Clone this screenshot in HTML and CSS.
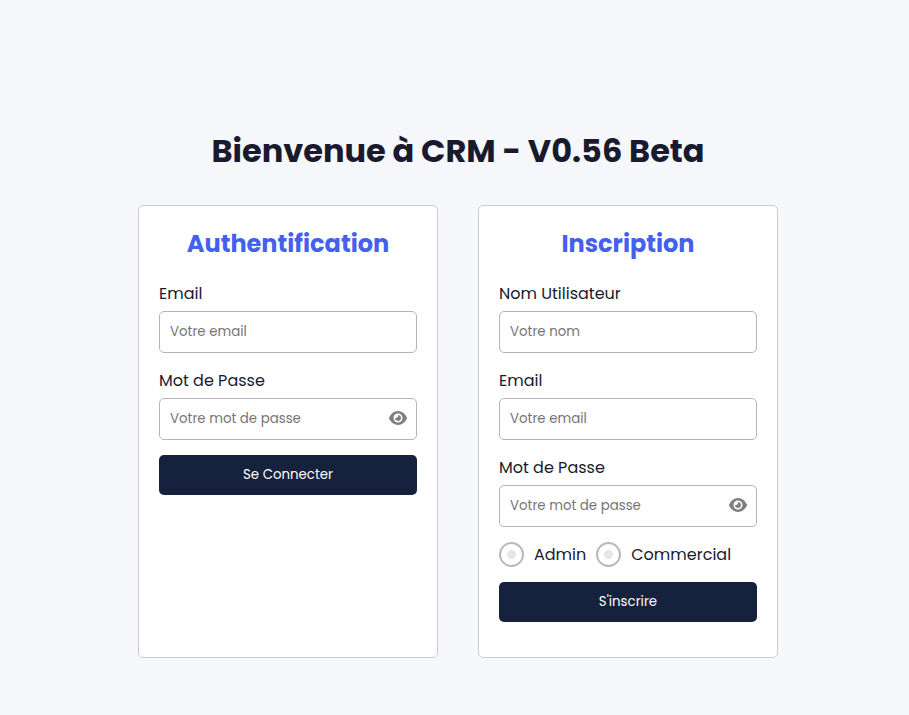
FILE: index.html
```html
<!DOCTYPE html>
<html lang="fr">
<head>
<meta charset="utf-8">
<title>CRM</title>
<link rel="stylesheet" href="styles.css">
</head>
<body>
<svg class="sprite" aria-hidden="true"><symbol id="eye" viewBox="0 0 576 512"><path d="M288 32c-80.8 0-145.5 36.8-192.6 80.6C48.6 156 17.3 208 2.5 243.7c-3.3 7.9-3.3 16.7 0 24.6C17.3 304 48.6 356 95.4 399.4C142.5 443.2 207.2 480 288 480s145.5-36.8 192.6-80.6c46.8-43.5 78.1-95.4 93-131.1c3.3-7.9 3.3-16.7 0-24.6c-14.9-35.7-46.2-87.7-93-131.1C433.5 68.8 368.8 32 288 32zM144 256a144 144 0 1 1 288 0 144 144 0 1 1 -288 0zm144-64c0 35.3-28.7 64-64 64c-7.1 0-13.9-1.2-20.3-3.3c-5.5-1.8-11.9 1.6-11.7 7.4c.3 6.9 1.3 13.8 3.2 20.7c13.7 51.2 66.4 81.6 117.6 67.9s81.6-66.4 67.9-117.6c-11.1-41.5-47.8-69.4-88.6-71.1c-5.8-.2-9.2 6.1-7.4 11.7c2.1 6.4 3.3 13.2 3.3 20.3z"/></symbol></svg>
<main class="page">
  <h1 class="title">Bienvenue à CRM - V0.56 Beta</h1>
  <div class="cards">
    <form class="card">
      <h2 class="heading">Authentification</h2>
      <div class="field"><label for="le">Email</label><input class="input" id="le" type="email" placeholder="Votre email"></div>
      <div class="field"><label for="lp">Mot de Passe</label><div class="password"><input class="input" id="lp" type="password" placeholder="Votre mot de passe"><svg class="eye"><use href="#eye"/></svg></div></div>
      <button class="button" type="button">Se Connecter</button>
    </form>
    <form class="card">
      <h2 class="heading">Inscription</h2>
      <div class="field"><label for="rn">Nom Utilisateur</label><input class="input" id="rn" type="text" placeholder="Votre nom"></div>
      <div class="field"><label for="re">Email</label><input class="input" id="re" type="email" placeholder="Votre email"></div>
      <div class="field"><label for="rp">Mot de Passe</label><div class="password"><input class="input" id="rp" type="password" placeholder="Votre mot de passe"><svg class="eye"><use href="#eye"/></svg></div></div>
      <div class="roles">
        <label class="role"><input class="radio" type="radio" name="role"><span>Admin</span></label>
        <label class="role"><input class="radio" type="radio" name="role"><span>Commercial</span></label>
      </div>
      <button class="button" type="button">S'inscrire</button>
    </form>
  </div>
</main>
</body>
</html>
```
FILE: styles.css
```css
* { box-sizing: border-box; margin: 0; }
body {
  min-height: 100vh;
  background: #f5f7fb;
  color: #1a1a2e;
  font-family: Poppins, Inter, sans-serif;
  font-size: 16px;
  line-height: 24px;
}
.sprite { position: absolute; width: 0; height: 0; }
.page {
  display: flex;
  flex-direction: column;
  align-items: center;
  padding: 127px 0 0 7px;
}
.title { font-size: 32px; font-weight: 700; line-height: 48px; white-space: nowrap; }
.cards { display: flex; gap: 40px; margin-top: 30px; }
.card {
  width: 300px;
  height: 453px;
  padding: 20px;
  background: #fff;
  border: 1px solid #ccc;
  border-radius: 5px;
}
.heading { font-size: 24px; line-height: 36px; font-weight: 700; text-align: center; color: #4361ee; margin-bottom: 19px; }
.field { padding-top: 1px; margin-bottom: 15px; }
.field > label { display: block; line-height: 24px; margin-bottom: 5px; }
.input {
  display: block;
  width: 100%;
  height: 42px;
  padding: 0 10px;
  border: 1px solid #b5b5b5;
  border-radius: 5px;
  background: #fff;
  font: inherit;
  font-size: 13.333px;
}
.input::placeholder { color: #757575; opacity: 1; }
.password { position: relative; }
.eye { position: absolute; right: 10px; top: 12px; width: 18px; height: 16px; fill: #808080; }
.button {
  display: block;
  width: 100%;
  height: 40px;
  border: 0;
  border-radius: 5px;
  background: #16213e;
  color: #fff;
  font: inherit;
  font-size: 13.333px;
}
.roles { display: flex; gap: 10px; margin-bottom: 15px; }
.role { display: flex; align-items: center; gap: 10px; height: 25px; }
.radio {
  appearance: none;
  width: 25px;
  height: 25px;
  border: 2px solid #b9b9b9;
  border-radius: 50%;
  background: radial-gradient(circle, #e6e6e6 4px, #fff 5px);
}
```
